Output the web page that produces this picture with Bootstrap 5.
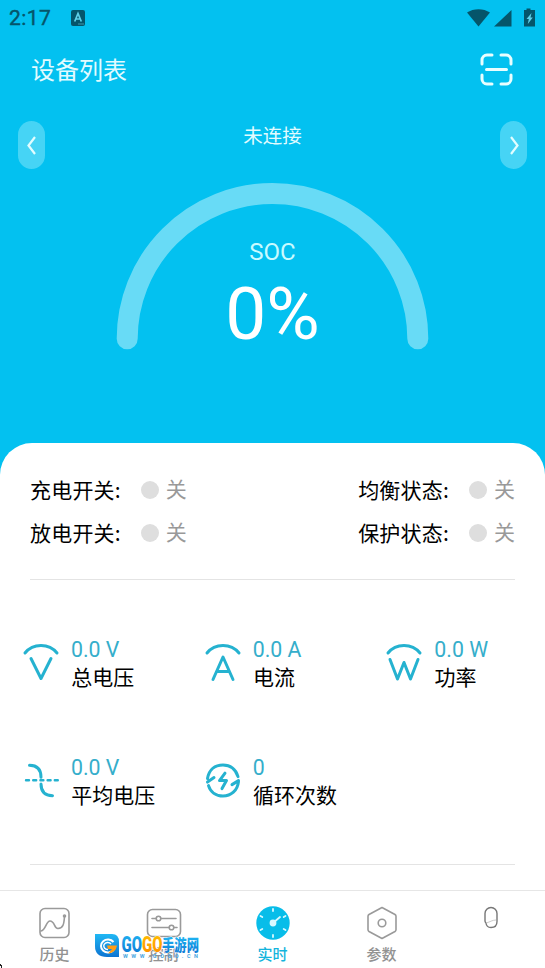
<!DOCTYPE html>
<html lang="zh-CN">

<head>
    <meta charset="UTF-8">
    <meta name="viewport" content="width=device-width, initial-scale=1.0">
    <link href="https://cdn.jsdelivr.net/npm/bootstrap@5.3.0/dist/css/bootstrap.min.css" rel="stylesheet">
    <script src="https://cdn.jsdelivr.net/npm/bootstrap@5.3.0/dist/js/bootstrap.bundle.min.js"></script>
    <title>设备列表</title>
    <style>
        body {
            font-family: Roboto, "Noto Sans CJK SC", sans-serif;
            background: #03c1f0;
            color: #000;
            height: 968px;
            overflow: hidden;
        }
        svg { display: block; flex: none; overflow: visible; }

        .status-bar { height: 36px; padding: 0 10px 0 9px; color: #05556a; }
        .clock { font-size: 21px; font-weight: 400; -webkit-text-stroke: .4px #05556a; line-height: 38px; letter-spacing: .4px; width: 62px; }
        .title-bar { height: 68px; padding: 0 33px 2px 31px; color: #e2fbff; }
        .page-title { font-size: 24px; line-height: 68px; padding-top: 4px; }

        .hero { height: 339px; padding: 0 18px; }
        .side-btn { width: 27px; height: 48px; border-radius: 14px; background: #46d4f5; margin-top: 17px; padding: 0; border: 0; }
        .link-state { font-size: 19.5px; line-height: 30px; margin-top: 18px; color: #e2fbff; }
        .gauge { margin-top: 30px; height: 170px; width: 314px; }
        .gauge-text { top: 55px; }
        .soc-label { font-size: 24px; line-height: 30px; color: #c9faff; }
        .soc-value { font-size: 73px; line-height: 90px; margin-top: 2px; color: #fff; }

        .panel { height: 447px; border-radius: 32px 32px 0 0; }
        .switches { padding: 26px 30px 0; height: 136px; font-size: 21px; }
        .switches .line { height: 43px; line-height: 43px; }
        .state-name { font-family: "Noto Sans CJK SC", sans-serif; letter-spacing: .2px; margin-top: -3px; }
        .dot { width: 18px; height: 18px; border-radius: 50%; background: #dedede; margin: -1px 7px 0 20px; }
        .off { color: #999; }
        .rule { height: 1px; background: #e4e4e4; margin: 0 30px; }

        .metrics { height: 284px; padding-top: 56px; align-content: flex-start; }
        .metric { height: 118px; padding-left: 22px; }
        .metric svg { margin: 5px 11px 0 0; }
        .metric .val { font-size: 21.3px; line-height: 28px; color: #35aecb; }
        .metric .name { font-size: 21px; line-height: 28px; padding-left: .3px; }
        .metric-icon { fill: none; stroke: #25b2d0; stroke-width: 3; stroke-linecap: round; stroke-linejoin: round; }

        .tabs { height: 78px; border-top: 1px solid #e6e6e6; }
        .tab { width: 109px; padding-top: 14px; font-size: 15px; font-weight: 500; color: #929292; }
        .tab span { line-height: 20px; margin-top: 4px; }
        .tab.on { color: #14b4dc; }
        .tab-icon { fill: none; stroke: #9a9a9a; stroke-width: 1.6; stroke-linecap: round; stroke-linejoin: round; }

        .stamp { left: 95px; top: 933px; }
        .corner-mark { left: 0; bottom: 0; }
    </style>
</head>

<body>
    <div class="status-bar d-flex align-items-center">
        <div class="clock">2:17</div>
        <svg width="14" height="16" viewBox="0 0 14 16">
            <rect width="14" height="16" rx="2" fill="#05556a"/>
            <path d="M3.700 11.500 7 3.500l3.300 8M5 9h4" fill="none" stroke="#5fd0e8" stroke-width="1.700"/>
            <path d="M7.500 14h1m1 0h1m1 0h1" stroke="#7fdcf0"/>
        </svg>
        <svg class="ms-auto" width="68" height="20" viewBox="0 0 68 20" fill="currentColor">
            <path d="M0 4.500C6.500 0 16.500 0 23 4.500L11.500 18.500z"/>
            <path d="M27 18.500 44.500 2v16.500z"/>
            <path d="M57 2h2.500V.5h4V2H68v16.500H57z"/>
            <path d="M64.500 5 59.500 11h2.300l-1 5 5-6.500h-2.300z" fill="#5fd0e8"/>
        </svg>
    </div>

    <div class="title-bar d-flex align-items-center justify-content-between">
        <div class="page-title">设备列表</div>
        <svg width="31" height="31" viewBox="1 1 31 31" fill="none" stroke="#e8feff" stroke-width="3" stroke-linecap="round">
            <path d="M12 2H7a5 5 0 0 0-5 5v4M21 2h5a5 5 0 0 1 5 5v4M12 31H7a5 5 0 0 1-5-5v-4M21 31h5a5 5 0 0 0 5-5v-4M6.500 16.500h20"/>
        </svg>
    </div>

    <div class="hero d-flex justify-content-between align-items-start">
        <button class="side-btn d-flex align-items-center justify-content-center">
            <svg width="10" height="18" viewBox="0 0 10 18" fill="none" stroke="#e2fdff" stroke-width="2.200"><path d="M8 1 1.500 9.500 8 18"/></svg>
        </button>
        <div class="d-flex flex-column align-items-center">
            <div class="link-state">未连接</div>
            <div class="gauge position-relative">
                <svg width="314" height="170" viewBox="0 0 314 170">
                    <path d="M11.200 156.800a145.300 145.300 0 0 1 290.600 0" fill="none" stroke="#68dbf6" stroke-width="21" stroke-linecap="round"/>
                </svg>
                <div class="gauge-text position-absolute w-100 text-center">
                    <div class="soc-label">SOC</div>
                    <div class="soc-value">0%</div>
                </div>
            </div>
        </div>
        <button class="side-btn d-flex align-items-center justify-content-center">
            <svg width="10" height="18" viewBox="0 0 10 18" fill="none" stroke="#e2fdff" stroke-width="2.200"><path d="M2 1 8.500 9.500 2 18"/></svg>
        </button>
    </div>

    <div class="panel bg-white">
        <div class="switches d-flex justify-content-between">
            <div>
                <div class="line d-flex align-items-center"><span class="state-name">充电开关:</span><i class="dot"></i><span class="off">关</span></div>
                <div class="line d-flex align-items-center"><span class="state-name">放电开关:</span><i class="dot"></i><span class="off">关</span></div>
            </div>
            <div>
                <div class="line d-flex align-items-center"><span class="state-name">均衡状态:</span><i class="dot"></i><span class="off">关</span></div>
                <div class="line d-flex align-items-center"><span class="state-name">保护状态:</span><i class="dot"></i><span class="off">关</span></div>
            </div>
        </div>
        <div class="rule"></div>

        <div class="metrics row g-0">
            <div class="metric col-4 d-flex">
                <svg class="metric-icon" width="38" height="42" viewBox="0 0 38 42"><path d="M3 12C11 2 27 2 35 12M9 17.500 19 37.500l10-20"/></svg>
                <div><div class="val">0.0 V</div><div class="name">总电压</div></div>
            </div>
            <div class="metric col-4 d-flex">
                <svg class="metric-icon" width="38" height="42" viewBox="0 0 38 42"><path d="M3 12C11 2 27 2 35 12M9 38.500 19 16l10 22.500M13 30.500h12"/></svg>
                <div><div class="val">0.0 A</div><div class="name">电流</div></div>
            </div>
            <div class="metric col-4 d-flex">
                <svg class="metric-icon" width="38" height="42" viewBox="0 0 38 42"><path d="M3 12C11 2 27 2 35 12M5 18.500l7.500 19.500L19 21.500 25.500 38 33 18.500"/></svg>
                <div><div class="val">0.0 W</div><div class="name">功率</div></div>
            </div>
            <div class="metric col-4 d-flex">
                <svg class="metric-icon" width="38" height="42" viewBox="0 0 38 42">
                    <path d="M7.500 6.200c7.500 0 11.500 4 11.500 12M19 25c0 8 4 11.500 11.500 11.800"/>
                    <path d="M4 21.300h32" stroke-width="2.400" stroke-dasharray="3 4.200"/>
                </svg>
                <div><div class="val">0.0 V</div><div class="name">平均电压</div></div>
            </div>
            <div class="metric col-4 d-flex">
                <svg class="metric-icon" width="38" height="42" viewBox="0 -1.600 38 42">
                    <path d="M3.500 18C5 9 11 4.500 19 4.500c7 0 12.500 4 15 11.500M3.500 21.500 10 17M34.500 21C33.500 30 27 35.500 19 35.500c-7 0-12.500-4-14.500-10.500M34.500 20l-6.500 4"/>
                    <path d="M21 12.500l-5.500 7.500h7L18 28"/>
                </svg>
                <div><div class="val">0</div><div class="name">循环次数</div></div>
            </div>
        </div>
        <div class="rule"></div>
    </div>

    <nav class="tabs bg-white d-flex">
        <div class="tab d-flex flex-column align-items-center">
            <svg class="tab-icon" width="34" height="36" viewBox="0 0 34 36">
                <rect x="2" y="3.500" width="29" height="29" rx="5"/>
                <path d="M3 26c5-1 5-10 9-10 5 0 4 8 8 7.500 5-.5 6-4 6.500-12"/><circle cx="26.500" cy="11" r="1"/>
            </svg>
            <span>历史</span>
        </div>
        <div class="tab d-flex flex-column align-items-center">
            <svg class="tab-icon" width="36" height="36" viewBox="0 0 36 36">
                <rect x="1.500" y="4.500" width="33" height="27" rx="5"/>
                <path d="M6 13.500h4m5 0h15M6 22.500h17m5 0h3"/><circle cx="12.500" cy="13.500" r="2.300"/><circle cx="25.500" cy="22.500" r="2.300"/>
            </svg>
            <span>控制</span>
        </div>
        <div class="tab on d-flex flex-column align-items-center">
            <svg width="36" height="36" viewBox="0 0 36 36" fill="none" stroke="#d9f8ff" stroke-width="1.800" stroke-linecap="round">
                <circle cx="18" cy="18" r="16.700" fill="#08bde9" stroke="none"/>
                <path d="M18 4v2M18 30v2M5.500 11l1.800 1M30.500 11l-1.800 1M5.500 25l1.800-1M30.500 25l-1.800-1M18 18l7-6"/>
                <circle cx="18" cy="18" r="2.500" fill="#d9f8ff"/>
            </svg>
            <span>实时</span>
        </div>
        <div class="tab d-flex flex-column align-items-center">
            <svg class="tab-icon" width="36" height="36" viewBox="0 0 36 36">
                <path d="M18 2.500 31 9.500q1 .6 1 1.700v13.600q0 1.100-1 1.700L18 33.500 5 26.500q-1-.6-1-1.700V11.200q0-1.100 1-1.700z"/>
                <circle cx="18" cy="18" r="3.800"/>
            </svg>
            <span>参数</span>
        </div>
        <div class="tab d-flex flex-column align-items-center">
            <svg width="16" height="24" viewBox="0 0 16 24" fill="none" stroke="#777" stroke-width="1.400">
                <path d="M2 8.500a6 6 0 0 1 12 0v8q0 6-6 6-4.500 0-5-4.500-1-1-1-2z"/>
                <path d="M3.500 18c3-1 6-3 9.500-3" stroke="#bbb" stroke-width=".8"/>
            </svg>
        </div>
    </nav>

    <svg class="stamp position-absolute" width="106" height="27" viewBox="0 0 106 27">
        <defs>
            <linearGradient id="blue" x1="0" y1="0" x2="0" y2="1"><stop offset="0" stop-color="#20b8f4"/><stop offset="1" stop-color="#0c74d2"/></linearGradient>
            <linearGradient id="gold" x1="0" y1="0" x2="0" y2="1"><stop offset="0" stop-color="#ffc400"/><stop offset="1" stop-color="#ff8a00"/></linearGradient>
        </defs>
        <path d="M0 1h17q7 0 7 8v15H12Q0 24 0 13z" fill="url(#blue)"/>
        <path d="M18.500 9a7 6.500 0 1 0 0 8" fill="none" stroke="#fff" stroke-width="2"/>
        <path d="M16 11a4 3.500 0 1 0-3 5.500" fill="none" stroke="#fff" stroke-width="1.500"/>
        <path d="M12 12.500h10q-1 7-9 8l4-4.500h-4z" fill="#ff9d15"/>
        <g font-family="Roboto, 'Noto Sans CJK SC', sans-serif" font-weight="900" paint-order="stroke" stroke="#fff" stroke-width="1">
            <text x="26.500" y="18.500" font-size="21.500" textLength="20.500" lengthAdjust="spacingAndGlyphs" fill="url(#blue)">GO</text>
            <text x="47" y="18.500" font-size="21.500" textLength="20.500" lengthAdjust="spacingAndGlyphs" fill="url(#gold)">GO</text>
            <text x="67" y="18" font-size="16" textLength="37" lengthAdjust="spacingAndGlyphs" fill="url(#blue)">手游网</text>
        </g>
        <text x="28" y="25" font-family="Roboto, sans-serif" font-size="5.500" font-weight="700" textLength="75" fill="#4aa6e0">WWW.GOGO.CN</text>
    </svg>
    <svg class="corner-mark position-absolute" width="3" height="4" viewBox="0 0 3 4"><path d="M0 0h1v1h1v3H1V2H0z" fill="#222"/></svg>
</body>

</html>
